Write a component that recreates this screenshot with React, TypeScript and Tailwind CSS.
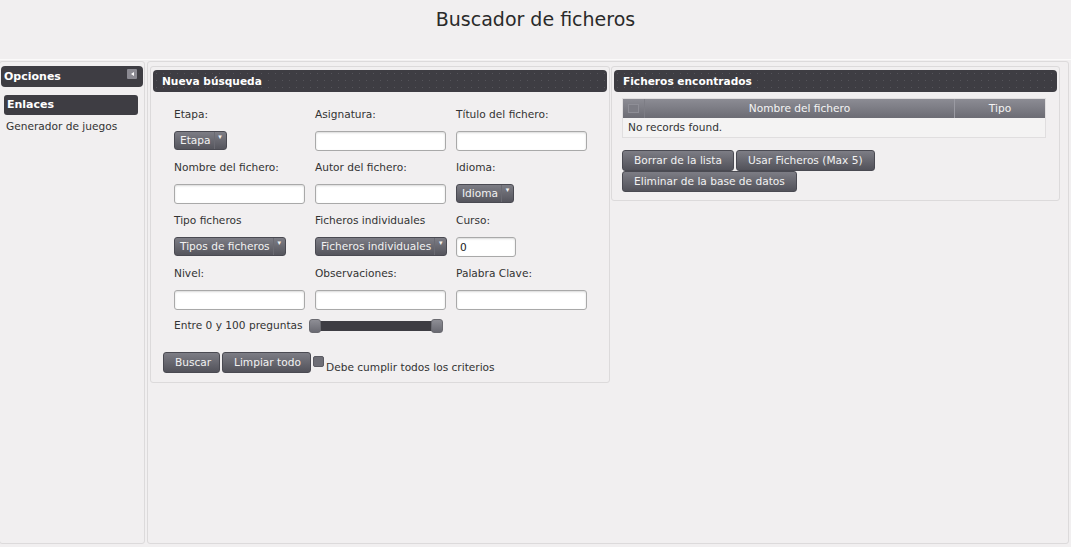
import { ReactNode } from "react";

// Buscador de ficheros - search form page (PrimeFaces-like layout)

const btn =
  "h-[21px] px-[11px] rounded-[3px] border border-[#4a4a52] bg-gradient-to-b from-[#7d7d85] to-[#52525a] text-[#f2f2f2] leading-[19px] whitespace-nowrap";

function Label({ children }: { children: ReactNode }) {
  return <div className="h-[17px] leading-[17px]">{children}</div>;
}

function TextInput({ value = "", w = "w-[131px]" }: { value?: string; w?: string }) {
  return (
    <div
      className={`${w} h-[20px] mt-[8px] rounded-[3px] border border-[#a9a9a9] bg-white shadow-[inset_0_1px_2px_rgba(0,0,0,0.15)] px-[3px] leading-[18px] text-[#222]`}
    >
      {value}
    </div>
  );
}

function SelectButton({ label }: { label: string }) {
  return (
    <div className="mt-[8px] inline-flex h-[19px] items-stretch rounded-[3px] border border-[#4a4a52] bg-gradient-to-b from-[#7d7d85] to-[#55555d] text-[#f2f2f2] leading-[17px]">
      <span className="pl-[5px] pr-[3px]">{label}</span>
      <span className="w-[12px] border-l border-[#6a6a72] flex items-start justify-center text-[7px] leading-[11px]">
        ▾
      </span>
    </div>
  );
}

function PanelHeader({ title }: { title: string }) {
  return (
    <div className="mx-[2px] mt-[3px] h-[22px] rounded-[4px] bg-[#3e3d43] px-[9px] font-bold text-white leading-[22px] bg-[radial-gradient(#55545a_0.6px,transparent_0.6px)] bg-[length:7px_7px]">
      <span className="bg-[#3e3d43] pr-1">{title}</span>
    </div>
  );
}

function Field({ label, children }: { label: string; children: ReactNode }) {
  return (
    <div className="flex flex-col items-start pl-[1px]">
      <Label>{label}</Label>
      {children}
    </div>
  );
}

export default function App() {
  return (
    <div className="w-[1071px] h-[547px] overflow-hidden bg-[#f1eff0] text-[#333] text-[10.6px] font-['DejaVu_Sans',Verdana,sans-serif]">
      {/* Header */}
      <div className="h-[60px] border-b border-[#fbfafa] text-center text-[19px] text-[#2a2a2a] pt-[6px] leading-[26px]">
        Buscador de ficheros
      </div>

      <div className="flex gap-[2px] h-[483px] mt-[1px]">
        {/* Left panel */}
        <aside className="w-[146px] -ml-[1px] rounded-[3px] border border-[#dcdadb] pt-[4px]">
          <div className="relative mx-[1px] h-[21px] rounded-[4px] bg-[#3e3d43] pl-[3px] font-bold text-white text-[11px] leading-[21px]">
            Opciones
            <span className="absolute right-[6px] top-[3px] w-[10px] h-[10px] rounded-[1px] bg-[#8b8a92] flex items-center justify-center">
              <span className="w-0 h-0 border-y-[2px] border-y-transparent border-r-[3px] border-r-white" />
            </span>
          </div>
          <div className="ml-[4px] w-[134px] mt-[8px] h-[20px] rounded-[3px] bg-[#3e3d43] pl-[3px] font-bold text-white text-[11px] leading-[20px]">
            Enlaces
          </div>
          <div className="pl-[6px] mt-[2px] leading-[18px]">Generador de juegos</div>
        </aside>

        {/* Main panel */}
        <main className="flex-1 mr-[2px] rounded-[3px] border border-[#dcdadb] flex items-start gap-[1px] pl-[2px] pt-[4px]">
          {/* Nueva búsqueda */}
          <section className="w-[460px] h-[317px] rounded-[3px] border border-[#dcdadb]">
            <PanelHeader title="Nueva búsqueda" />
            <div className="pl-[22px] pt-[14px]">
              <div className="grid grid-cols-[141px_141px_141px] gap-y-[8px]">
                <Field label="Etapa:">
                  <SelectButton label="Etapa" />
                </Field>
                <Field label="Asignatura:">
                  <TextInput />
                </Field>
                <Field label="Título del fichero:">
                  <TextInput />
                </Field>

                <Field label="Nombre del fichero:">
                  <TextInput />
                </Field>
                <Field label="Autor del fichero:">
                  <TextInput />
                </Field>
                <Field label="Idioma:">
                  <SelectButton label="Idioma" />
                </Field>

                <Field label="Tipo ficheros">
                  <SelectButton label="Tipos de ficheros" />
                </Field>
                <Field label="Ficheros individuales">
                  <SelectButton label="Ficheros individuales" />
                </Field>
                <Field label="Curso:">
                  <TextInput value="0" w="w-[60px]" />
                </Field>

                <Field label="Nivel:">
                  <TextInput />
                </Field>
                <Field label="Observaciones:">
                  <TextInput />
                </Field>
                <Field label="Palabra Clave:">
                  <TextInput />
                </Field>
              </div>

              {/* Slider */}
              <div className="mt-[7px] pl-[1px] flex items-center h-[17px]">
                <span className="leading-[17px]">Entre 0 y 100 preguntas</span>
                <div className="relative ml-[6px] w-[134px] h-[14px] flex items-center">
                  <div className="mx-[4px] h-[10px] flex-1 rounded-[2px] bg-[#3e3d43]" />
                  <span className="absolute left-0 top-0 w-[12px] h-[14px] rounded-[3px] border border-[#6a6a70] bg-gradient-to-b from-[#8e8e95] to-[#6a6a72]" />
                  <span className="absolute right-0 top-0 w-[12px] h-[14px] rounded-[3px] border border-[#6a6a70] bg-gradient-to-b from-[#8e8e95] to-[#6a6a72]" />
                </div>
              </div>
            </div>

            {/* Actions */}
            <div className="mt-[17px] ml-[12px] flex items-center gap-[2px]">
              <button className={`${btn} w-[57px] px-0`}>Buscar</button>
              <button className={`${btn} w-[89px] px-0`}>Limpiar todo</button>
              <span className="self-start mt-[5px] w-[11px] h-[11px] rounded-[2px] bg-[#6e6e76] border border-[#5a5a62]" />
              <span className="mt-[9px] leading-[14px]">Debe cumplir todos los criterios</span>
            </div>
          </section>

          {/* Ficheros encontrados */}
          <section className="w-[449px] h-[135px] rounded-[3px] border border-[#dcdadb]">
            <PanelHeader title="Ficheros encontrados" />
            <div className="px-[10px] pt-[6px]">
              <div className="w-[424px] border border-[#e0dedf]">
                <div className="flex h-[19px] bg-gradient-to-b from-[#8c8c94] to-[#6c6c74] text-[#f4f4f4] leading-[19px]">
                  <div className="w-[22px] border-r border-[#7d7d85] flex items-center justify-center">
                    <span className="w-[11px] h-[9px] bg-[#7c7c84] border border-[#8e8e96]" />
                  </div>
                  <div className="flex-1 text-center">Nombre del fichero</div>
                  <div className="w-[91px] border-l border-[#9a9aa2] text-center">Tipo</div>
                </div>
                <div className="h-[19px] pl-[5px] leading-[19px] bg-[#f4f3f3]">No records found.</div>
              </div>
              <div className="mt-[12px] flex gap-[2px]">
                <button className={btn}>Borrar de la lista</button>
                <button className={btn}>Usar Ficheros (Max 5)</button>
              </div>
              <div className="flex">
                <button className={btn}>Eliminar de la base de datos</button>
              </div>
            </div>
          </section>
        </main>
      </div>
    </div>
  );
}
